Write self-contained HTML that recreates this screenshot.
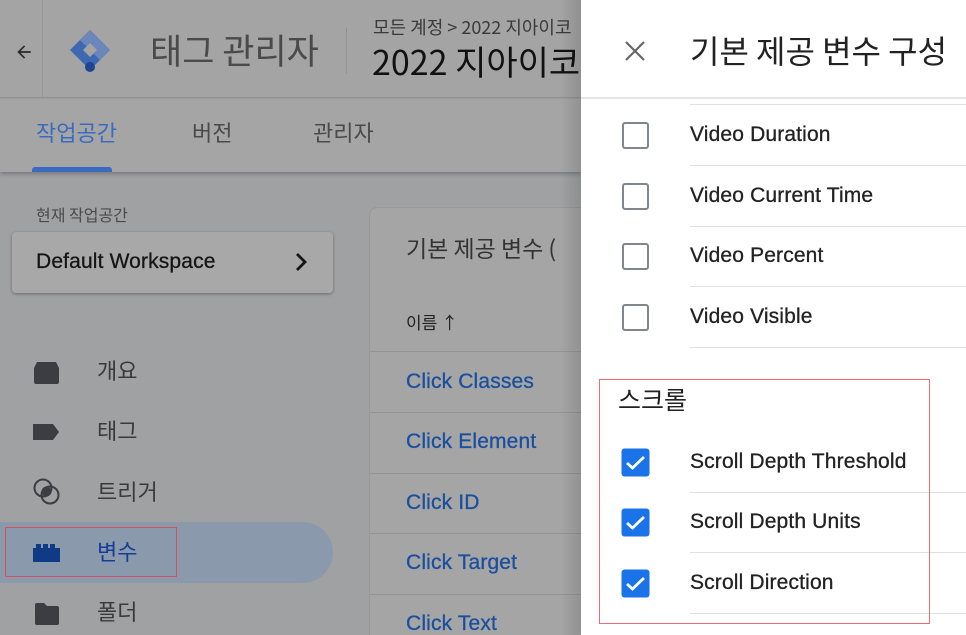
<!DOCTYPE html>
<html style="width:966px;height:635px;overflow:hidden"><head><meta charset="utf-8"><style>
*{margin:0;padding:0;box-sizing:border-box}
body{width:966px;height:635px;overflow:hidden;position:relative;background:#a0a1a3;font-family:"Liberation Sans","Noto Sans CJK KR",sans-serif;}
.a{position:absolute;white-space:nowrap}
.k{font-family:"Noto Sans CJK KR","Liberation Sans",sans-serif}
.t{font-size:21px;letter-spacing:0.15px;-webkit-text-stroke:0.3px currentColor}
</style></head><body>
<div class="a" style="left:0;top:0;width:581px;height:98px;background:#a4a4a4;border-bottom:1px solid #969696"></div>
<div class="a" style="left:42px;top:0;width:1px;height:98px;background:#969696"></div>
<svg class="a" style="left:14px;top:42px" width="20" height="20" viewBox="0 0 24 24"><path d="M20 11H7.8l5.6-5.6L12 4l-8 8 8 8 1.4-1.4L7.8 13H20z" fill="#2a2a2a"/></svg>
<svg class="a" style="left:68px;top:28px" width="44" height="46" viewBox="0 0 44 46"><path d="M22 2 L42 22 L22 42 L2 22Z" fill="#3f68b2"/><path d="M22 2 L42 22 L32 32 L12 12Z" fill="#6a86ba"/><path d="M22 15 L29 22 L22 29 L15 22Z" fill="#a4a4a4"/><circle cx="22" cy="39" r="5" fill="#1c4490"/></svg>
<div class="a k" style="left:150px;top:24px;font-size:35px;color:#4a4a4a">태그 관리자</div>
<div class="a" style="left:346px;top:28px;width:1px;height:46px;background:#929292"></div>
<div class="a k" style="left:373px;top:14px;font-size:18px;color:#3a3a3a">모든 계정 &gt; 2022 지아이코</div>
<div class="a k" style="left:372px;top:36px;font-size:34px;color:#111">2022 지아이코</div>
<div class="a" style="left:0;top:99px;width:581px;height:73px;background:#a5a5a5;box-shadow:0 2px 4px rgba(0,0,0,.25)"></div>
<div class="a k" style="left:36px;top:116px;font-size:22px;color:#3a6bc0">작업공간</div>
<div class="a k" style="left:192px;top:116px;font-size:22px;color:#4a4a4a">버전</div>
<div class="a k" style="left:313px;top:116px;font-size:22px;color:#4a4a4a">관리자</div>
<div class="a" style="left:32px;top:167px;width:80px;height:5px;background:#3a6bc0;border-radius:3px 3px 0 0"></div>
<div class="a k" style="left:36px;top:202px;font-size:16px;color:#4a4a4a">현재 작업공간</div>
<div class="a" style="left:12px;top:232px;width:321px;height:61px;background:#a8a8a8;border-radius:4px;box-shadow:0 1px 3px rgba(0,0,0,.35)"></div>
<div class="a t" style="left:36px;top:250px;color:#151515">Default Workspace</div>
<svg class="a" style="left:292px;top:251px" width="20" height="22" viewBox="0 0 20 22"><path d="M5 3l8 8-8 8" stroke="#151515" stroke-width="2.8" fill="none"/></svg>
<svg class="a" style="left:33px;top:360px" width="27" height="24" viewBox="0 0 27 24"><path d="M4 2h19l3 6v14a2 2 0 0 1-2 2H3a2 2 0 0 1-2-2V8z" fill="#3b3d42"/></svg>
<div class="a k" style="left:97px;top:354px;font-size:22px;color:#3a3a3a">개요</div>
<svg class="a" style="left:33px;top:423px" width="27" height="18" viewBox="0 0 27 18"><path d="M0 1h20l6 8-6 8H0z" fill="#3b3d42"/></svg>
<div class="a k" style="left:97px;top:414px;font-size:22px;color:#3a3a3a">태그</div>
<svg class="a" style="left:33px;top:478px" width="28" height="28" viewBox="0 0 28 28"><circle cx="10" cy="10" r="8.5" stroke="#3b3d42" stroke-width="2" fill="none"/><circle cx="17" cy="17" r="8.5" stroke="#3b3d42" stroke-width="2" fill="none"/><circle cx="13.5" cy="13.5" r="5" fill="#3b3d42"/></svg>
<div class="a k" style="left:97px;top:475px;font-size:22px;color:#3a3a3a">트리거</div>
<div class="a" style="left:0;top:522px;width:333px;height:61px;background:#8b99ad;border-radius:0 31px 31px 0"></div>
<div class="a" style="left:5px;top:527px;width:172px;height:50px;border:1px solid #d85060"></div>
<svg class="a" style="left:33px;top:544px" width="27" height="18" viewBox="0 0 27 18"><path d="M0 4h3V0h5v4h2V0h5v4h2V0h5v4h5v14H0z" fill="#0e3a86"/></svg>
<div class="a k" style="left:97px;top:535px;font-size:22px;color:#123f95">변수</div>
<svg class="a" style="left:35px;top:603px" width="24" height="22" viewBox="0 0 24 22"><path d="M0 2a2 2 0 0 1 2-2h7l3 3h10a2 2 0 0 1 2 2v15a2 2 0 0 1-2 2H2a2 2 0 0 1-2-2z" fill="#3b3d42"/></svg>
<div class="a k" style="left:97px;top:595px;font-size:22px;color:#3a3a3a">폴더</div>
<div class="a" style="left:369px;top:207px;width:240px;height:428px;background:#a5a5a5;border-radius:8px 0 0 0;border:1px solid #979797;border-bottom:none"></div>
<div class="a k" style="left:406px;top:230px;font-size:23px;color:#333">기본 제공 변수 (</div>
<div class="a k" style="left:406px;top:309px;font-size:17px;color:#222">이름 ↑</div>
<div class="a" style="left:369px;top:351px;width:212px;height:1px;background:#949494"></div>
<div class="a" style="left:369px;top:412px;width:212px;height:1px;background:#949494"></div>
<div class="a" style="left:369px;top:473px;width:212px;height:1px;background:#949494"></div>
<div class="a" style="left:369px;top:533px;width:212px;height:1px;background:#949494"></div>
<div class="a" style="left:369px;top:594px;width:212px;height:1px;background:#949494"></div>
<div class="a t" style="left:406px;top:370px;color:#1a4f9e">Click Classes</div>
<div class="a t" style="left:406px;top:430px;color:#1a4f9e">Click Element</div>
<div class="a t" style="left:406px;top:491px;color:#1a4f9e">Click ID</div>
<div class="a t" style="left:406px;top:551px;color:#1a4f9e">Click Target</div>
<div class="a t" style="left:406px;top:612px;color:#1a4f9e">Click Text</div>
<div class="a" style="left:560px;top:0;width:21px;height:635px;background:linear-gradient(to right,rgba(0,0,0,0),rgba(0,0,0,.12))"></div>
<div class="a" style="left:581px;top:0;width:385px;height:635px;background:#fff"></div>
<svg class="a" style="left:624px;top:40px" width="22" height="22" viewBox="0 0 22 22"><path d="M2 2l18 18M20 2L2 20" stroke="#666" stroke-width="2.2"/></svg>
<div class="a k" style="left:690px;top:27px;font-size:32px;color:#222">기본 제공 변수 구성</div>
<div class="a" style="left:581px;top:97px;width:385px;height:2px;background:#e4e4e4"></div>
<div class="a" style="left:690px;top:104px;width:276px;height:1px;background:#e0e0e0"></div>
<div class="a" style="left:690px;top:165px;width:276px;height:1px;background:#e0e0e0"></div>
<div class="a" style="left:690px;top:226px;width:276px;height:1px;background:#e0e0e0"></div>
<div class="a" style="left:690px;top:286px;width:276px;height:1px;background:#e0e0e0"></div>
<div class="a" style="left:690px;top:347px;width:276px;height:1px;background:#e0e0e0"></div>
<div class="a" style="left:690px;top:492px;width:276px;height:1px;background:#e0e0e0"></div>
<div class="a" style="left:690px;top:552px;width:276px;height:1px;background:#e0e0e0"></div>
<div class="a" style="left:690px;top:613px;width:276px;height:1px;background:#e0e0e0"></div>
<div class="a" style="left:622px;top:122px;width:27px;height:27px;border:2px solid #80868b;border-radius:3px"></div>
<div class="a" style="left:622px;top:183px;width:27px;height:27px;border:2px solid #80868b;border-radius:3px"></div>
<div class="a" style="left:622px;top:243px;width:27px;height:27px;border:2px solid #80868b;border-radius:3px"></div>
<div class="a" style="left:622px;top:304px;width:27px;height:27px;border:2px solid #80868b;border-radius:3px"></div>
<div class="a t" style="left:690px;top:123px;color:#222">Video Duration</div>
<div class="a t" style="left:690px;top:184px;color:#222">Video Current Time</div>
<div class="a t" style="left:690px;top:244px;color:#222">Video Percent</div>
<div class="a t" style="left:690px;top:305px;color:#222">Video Visible</div>
<div class="a" style="left:599px;top:379px;width:331px;height:245px;border:1px solid #ee6a76"></div>
<div class="a k" style="left:618px;top:381px;font-size:25px;color:#222">스크롤</div>
<svg class="a" style="left:621px;top:448px" width="29" height="29" viewBox="0 0 29 29"><rect x="0.5" y="0.5" width="28" height="28" rx="3" fill="#1a73e8"/><path d="M6 15l5.5 5L23 9" stroke="#fff" stroke-width="2.8" fill="none"/></svg>
<svg class="a" style="left:621px;top:508px" width="29" height="29" viewBox="0 0 29 29"><rect x="0.5" y="0.5" width="28" height="28" rx="3" fill="#1a73e8"/><path d="M6 15l5.5 5L23 9" stroke="#fff" stroke-width="2.8" fill="none"/></svg>
<svg class="a" style="left:621px;top:569px" width="29" height="29" viewBox="0 0 29 29"><rect x="0.5" y="0.5" width="28" height="28" rx="3" fill="#1a73e8"/><path d="M6 15l5.5 5L23 9" stroke="#fff" stroke-width="2.8" fill="none"/></svg>
<div class="a t" style="left:690px;top:450px;color:#222">Scroll Depth Threshold</div>
<div class="a t" style="left:690px;top:510px;color:#222">Scroll Depth Units</div>
<div class="a t" style="left:690px;top:571px;color:#222">Scroll Direction</div>
</body></html>
